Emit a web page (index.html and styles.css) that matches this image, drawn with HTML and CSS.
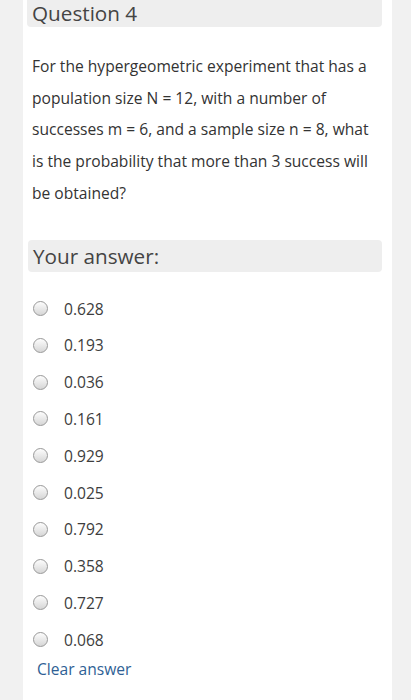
FILE: index.html
```html
<!DOCTYPE html>
<html lang="en">
<head>
  <meta charset="UTF-8" />
  <meta name="viewport" content="width=device-width, initial-scale=1" />
  <title>Question 4</title>
  <link rel="stylesheet" href="styles.css">
</head>
<body>
  <main class="card">
    <h2 class="q-title">Question 4</h2>

    <p class="q-text">
      For the hypergeometric experiment that has a population size N = 12, with a number of
      successes m = 6, and a sample size n = 8, what is the probability that more than 3 success will
      be obtained?
    </p>

    <h3 class="answer-title">Your answer:</h3>

    <ul class="options">
      <li><label><input type="radio" name="q4" /> <span>0.628</span></label></li>
      <li><label><input type="radio" name="q4" /> <span>0.193</span></label></li>
      <li><label><input type="radio" name="q4" /> <span>0.036</span></label></li>
      <li><label><input type="radio" name="q4" /> <span>0.161</span></label></li>
      <li><label><input type="radio" name="q4" /> <span>0.929</span></label></li>
      <li><label><input type="radio" name="q4" /> <span>0.025</span></label></li>
      <li><label><input type="radio" name="q4" /> <span>0.792</span></label></li>
      <li><label><input type="radio" name="q4" /> <span>0.358</span></label></li>
      <li><label><input type="radio" name="q4" /> <span>0.727</span></label></li>
      <li><label><input type="radio" name="q4" /> <span>0.068</span></label></li>
    </ul>

    <a class="clear-link" href="#">Clear answer</a>
  </main>
</body>
</html>
```

FILE: styles.css
```css
*, *::before, *::after { box-sizing: border-box; }

body {
  margin: 0;
  background: #f1f1f1;
  font-family: 'Open Sans', 'Noto Sans', sans-serif;
  color: #3d3d3d;
}

.card {
  margin-left: 23px;
  width: 369px;
  min-height: 700px;
  background: #fff;
  padding: 0 10px 0 4px;
}

.q-title {
  margin: 0;
  background: #eeeeee;
  border-radius: 0 0 4px 4px;
  height: 27px;
  padding-left: 5px;
  font-size: 20.7px;
  font-weight: 400;
  line-height: 27px;
  color: #444;
}

.q-text {
  margin: 24px 0 0;
  padding-left: 5px;
  font-size: 15.6px;
  line-height: 31.7px;
  color: #333;
}

.answer-title {
  margin: 30px 0 0 1px;
  background: #eeeeee;
  border-radius: 4px;
  height: 32px;
  padding-left: 5px;
  font-size: 20.7px;
  font-weight: 400;
  line-height: 32px;
  color: #444;
}

.options {
  list-style: none;
  margin: 19px 0 0;
  padding: 0;
}

.options li {
  height: 36.8px;
}

.options label {
  display: flex;
  align-items: center;
  height: 36px;
  padding-left: 5px;
  font-size: 15.6px;
  color: #3d3d3d;
}

.options input[type="radio"] {
  -webkit-appearance: none;
  appearance: none;
  margin: 0 0 0 1px;
  width: 15px;
  height: 15px;
  border-radius: 50%;
  border: 1px solid #999;
  background: linear-gradient(to bottom, #fdfdfd, #d6d6d6);
}

.options span {
  margin-left: 16px;
}

.clear-link {
  display: inline-block;
  margin-left: 10px;
  margin-top: -8px;
  font-size: 15.6px;
  color: #2f5f95;
  text-decoration: none;
}
```
